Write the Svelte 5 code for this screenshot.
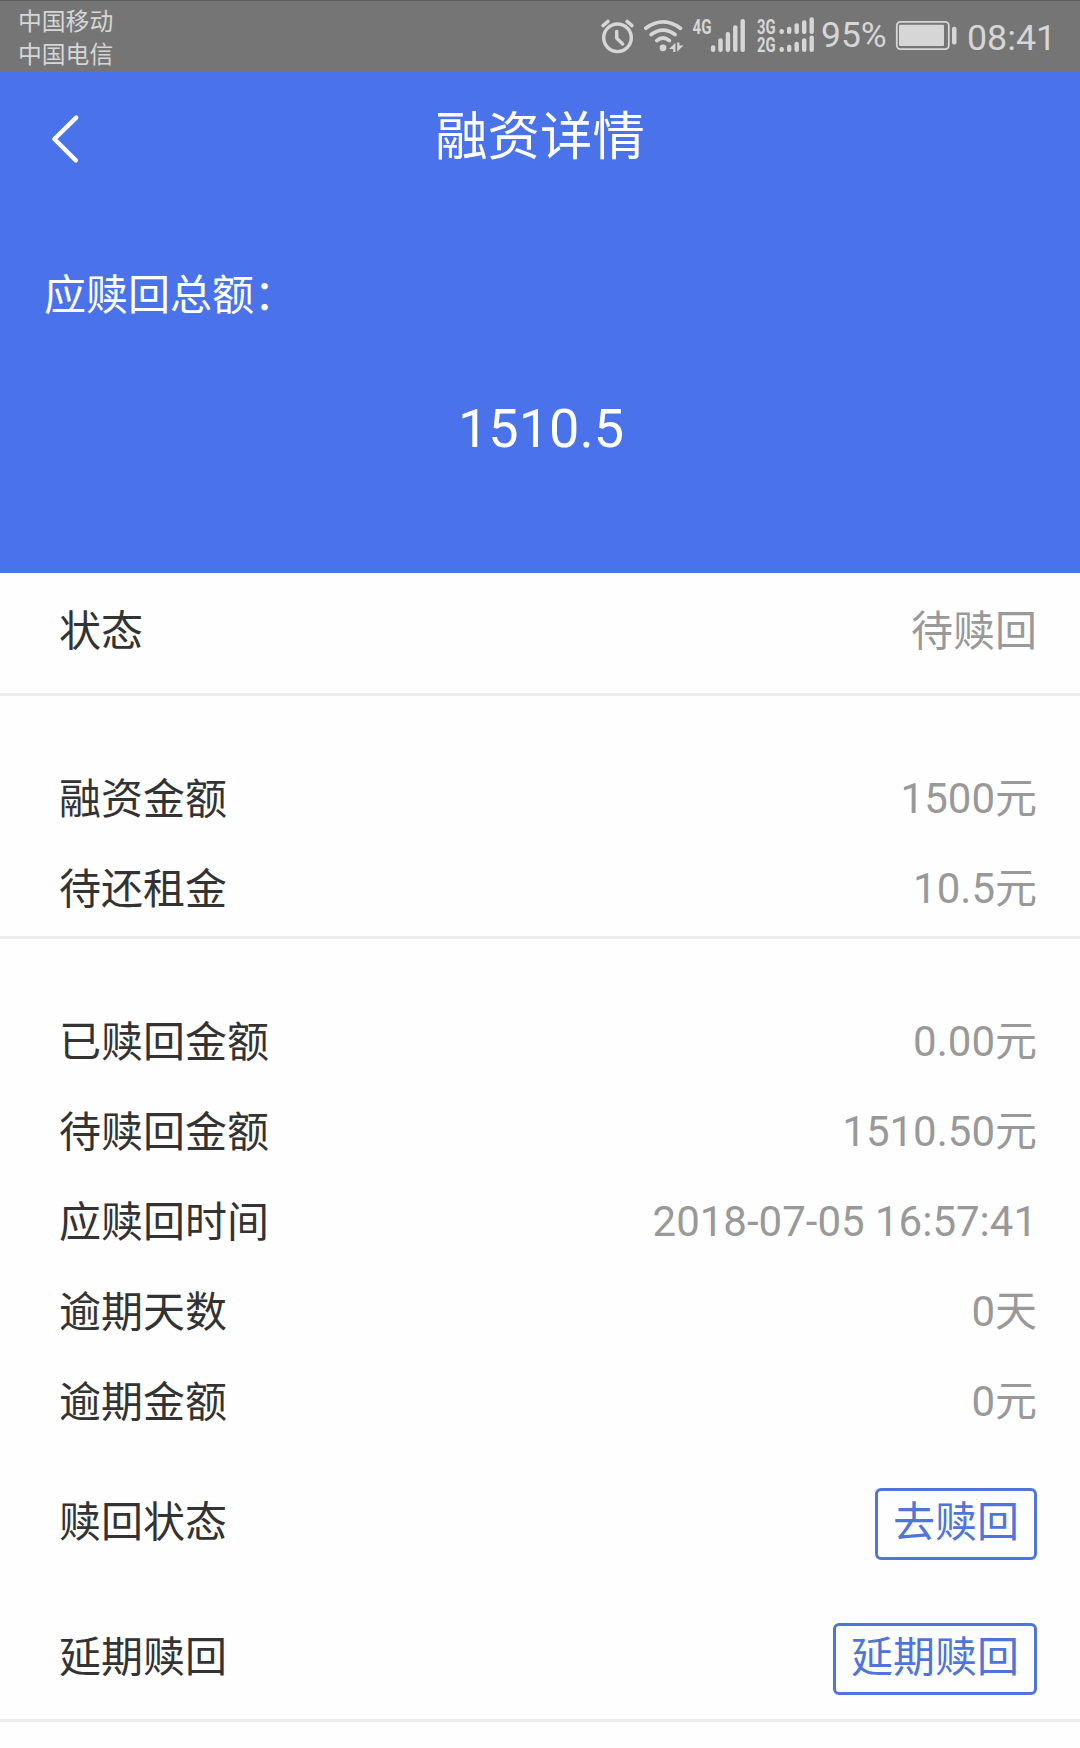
<script>
  const total = '1510.5'

  const loanRows = [
    { label: '融资金额', value: '1500元' },
    { label: '待还租金', value: '10.5元' },
  ]

  const redeemRows = [
    { label: '已赎回金额', value: '0.00元' },
    { label: '待赎回金额', value: '1510.50元' },
    { label: '应赎回时间', value: '2018-07-05 16:57:41' },
    { label: '逾期天数', value: '0天' },
    { label: '逾期金额', value: '0元' },
  ]

  const actions = [
    { label: '赎回状态', button: '去赎回' },
    { label: '延期赎回', button: '延期赎回' },
  ]

  // top edge of each signal bar, left to right
  const bars4g = [45.3, 38.3, 32, 25.3, 19]
  const bars3g = [29, 26.7, 23.3, 20.3, 17.3]
  const bars2g = [47, 44.7, 41.7, 38.3, 35.4]
</script>

<div class="page">
  <div class="statusbar">
    <div class="carriers">
      <span>中国移动</span>
      <span>中国电信</span>
    </div>
    <div class="indicators">
      <svg class="alarm" width="36" height="72" viewBox="600 0 36 72">
        <g fill="none" stroke="#d6d6d6" stroke-width="3.4" stroke-linecap="round" stroke-linejoin="round">
          <circle cx="617.5" cy="37.8" r="13.8" />
          <path d="M603 25.6l5-4.2M627 21.4l5 4.2" />
          <path d="M616.7 31.5v6.8l6 5.6" />
        </g>
      </svg>
      <svg class="wifi" width="40" height="72" viewBox="644 0 40 72">
        <g fill="none" stroke="#d6d6d6" stroke-width="3.8" stroke-linecap="round">
          <path d="M645.8 28.2Q663 15.6 680.4 28.2" />
          <path d="M651.2 34.6Q663 25.6 675 34.6" />
          <path d="M656.8 40.6Q663 35.4 669.4 40.6" />
        </g>
        <circle cx="663" cy="47.8" r="3.4" fill="#d6d6d6" />
        <path d="M675.4 42.8v9.2h-2.2v-3h-4.2zM677.2 51.8v-9.2h2.2v3h4z" fill="#d6d6d6" />
      </svg>
      <svg class="signal" width="54" height="72" viewBox="692 0 54 72">
        <text x="692.6" y="34" textLength="19" lengthAdjust="spacingAndGlyphs">4G</text>
        {#each bars4g as top, i}
          <rect x={710.9 + i * 7.4} y={top} width="4.4" height={52 - top} rx="2" />
        {/each}
      </svg>
      <svg class="dual" width="59" height="72" viewBox="756 0 59 72">
        <text x="757" y="34" textLength="18.6" lengthAdjust="spacingAndGlyphs">3G</text>
        <text x="757" y="52" textLength="18.6" lengthAdjust="spacingAndGlyphs">2G</text>
        {#each bars3g as top, i}
          <rect x={779.5 + i * 7.5} y={top} width="4.4" height={34 - top} rx="2" />
        {/each}
        {#each bars2g as top, i}
          <rect x={779.5 + i * 7.5} y={top} width="4.4" height={52 - top} rx="2" />
        {/each}
      </svg>
      <span class="percent">95%</span>
      <svg class="battery" width="62" height="72" viewBox="895 0 62 72">
        <rect x="896.8" y="21.9" width="52" height="27.2" rx="3.6" fill="none" stroke="#d6d6d6" stroke-width="1.8" />
        <rect x="899" y="24.7" width="45" height="21.4" rx="1" fill="#d6d6d6" />
        <rect x="952" y="26.8" width="4.5" height="17.6" rx="2" fill="#d6d6d6" />
      </svg>
      <span class="time">08:41</span>
    </div>
  </div>

  <header>
    <div class="navbar">
      <svg class="back" width="30" height="50" viewBox="0 0 30 50">
        <path d="M25.2 3.6L3.4 25l21.4 21.4" />
      </svg>
      <h1>融资详情</h1>
    </div>
    <p class="total-label">应赎回总额：</p>
    <p class="total">{total}</p>
  </header>

  <section class="state">
    <div class="row">
      <span class="label">状态</span>
      <span class="value text">待赎回</span>
    </div>
  </section>

  <section>
    {#each loanRows as { label, value }}
      <div class="row">
        <span class="label">{label}</span>
        <span class="value">{value}</span>
      </div>
    {/each}
  </section>

  <section class="redeem">
    {#each redeemRows as { label, value }}
      <div class="row">
        <span class="label">{label}</span>
        <span class="value">{value}</span>
      </div>
    {/each}
    <div class="actions">
      {#each actions as { label, button }}
        <div class="action">
          <span class="label">{label}</span>
          <button type="button">{button}</button>
        </div>
      {/each}
    </div>
  </section>
</div>

<style>
  :global(body) {
    margin: 0;
    background: #fefefe;
  }
  .page {
    width: 1080px;
    height: 1748px;
    overflow: hidden;
    background: #fefefe;
    color: #333333;
    font-family: Roboto, 'Noto Sans CJK SC', sans-serif;
    font-size: 42px;
  }
  .statusbar {
    display: flex;
    justify-content: space-between;
    box-sizing: border-box;
    height: 72px;
    padding: 0 23px 0 18px;
    background: #757575;
    box-shadow: inset 0 1px #5c5c5c;
    color: #d6d6d6;
  }
  .carriers {
    display: flex;
    flex-direction: column;
    padding-top: 6px;
    font-size: 23.8px;
    line-height: 33px;
  }
  .indicators {
    display: flex;
    font-size: 36px;
  }
  .indicators svg {
    flex: none;
  }
  .indicators text {
    font-size: 20.4px;
    font-weight: 700;
  }
  .signal,
  .dual {
    fill: #d6d6d6;
  }
  .wifi {
    margin-left: 8px;
  }
  .signal {
    margin-left: 8px;
  }
  .dual {
    margin-left: 10px;
  }
  .percent {
    width: 69px;
    margin-left: 6px;
    font-size: 35.4px;
    line-height: 70px;
  }
  .battery {
    margin-left: 5px;
  }
  .time {
    width: 90px;
    margin-left: 10px;
    font-size: 35.8px;
    line-height: 76px;
  }
  header {
    height: 501px;
    background: #4a73eb;
    color: #ffffff;
  }
  .navbar {
    display: grid;
    grid-template-columns: 1fr auto 1fr;
    align-items: center;
    height: 126px;
  }
  .back {
    margin: 8px 0 0 51px;
  }
  .back path {
    fill: none;
    stroke: #ffffff;
    stroke-width: 4.4;
    stroke-linecap: round;
    stroke-linejoin: round;
  }
  h1 {
    margin: 0;
    padding-top: 4px;
    font-size: 52.4px;
    font-weight: 400;
    line-height: 122px;
  }
  .total-label {
    margin: 0;
    padding: 68px 44px 0;
    line-height: 60px;
  }
  .total {
    margin: 0;
    padding: 63px 0 0 2px;
    font-size: 54px;
    line-height: 80px;
    text-align: center;
  }
  section {
    padding: 58px 43px 2px 59px;
    border-bottom: 3px solid #ececec;
  }
  .state {
    padding-top: 13px;
    padding-bottom: 17px;
  }
  .redeem {
    padding-bottom: 24px;
  }
  .row {
    display: flex;
    justify-content: space-between;
    line-height: 90px;
    height: 90px;
  }
  .label,
  .text {
    padding-top: 1px;
  }
  .value {
    color: #999999;
  }
  .actions {
    display: flex;
    flex-direction: column;
    gap: 63px;
    padding-top: 41px;
  }
  .action {
    display: flex;
    justify-content: space-between;
    height: 72px;
    line-height: 68px;
  }
  button {
    box-sizing: border-box;
    height: 72px;
    padding: 1px 15px 3px;
    border: 3px solid #4f74da;
    border-radius: 6px;
    background: none;
    color: #4f74da;
    font: inherit;
    line-height: 62px;
  }
</style>
